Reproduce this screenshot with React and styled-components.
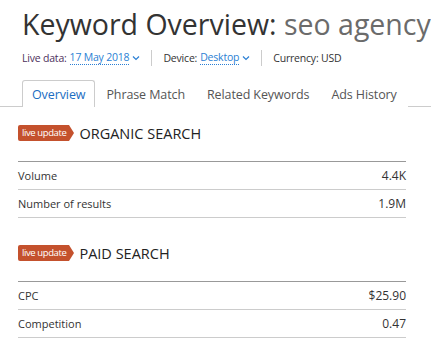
import styled, { createGlobalStyle } from "styled-components";

const Global = createGlobalStyle`
    body {
        margin: 0;
        background: #fff;
        font-family: "Open Sans", "Noto Sans", sans-serif;
        color: #333;
    }
`

const tabs = ["Overview", "Phrase Match", "Related Keywords", "Ads History"];

const sections = [
    {
        title: "ORGANIC SEARCH",
        rows: [["Volume", "4.4K"], ["Number of results", "1.9M"]],
    },
    {
        title: "PAID SEARCH",
        rows: [["CPC", "$25.90"], ["Competition", "0.47"]],
    },
];

function Chevron() {
    return (
        <svg width="8" height="6" viewBox="0 0 8 6">
            <path d="M1 1.5 L4 4.5 L7 1.5" fill="none" stroke="#2b7fd4" strokeWidth="1.2" />
        </svg>
    );
}

export default function App() {
    return (
        <Page>
            <Global />
            <Header>
                <Title>
                    Keyword Overview: <Keyword>seo agency</Keyword>
                </Title>
                <Info>
                    <InfoItem>
                        <Label purple>Live data:</Label>
                        <Link>17 May 2018</Link>
                        <Chevron />
                    </InfoItem>
                    <Divider />
                    <InfoItem>
                        <Label>Device:</Label>
                        <Link>Desktop</Link>
                        <Chevron />
                    </InfoItem>
                    <Divider />
                    <InfoItem>
                        <Label>Currency: USD</Label>
                    </InfoItem>
                </Info>
            </Header>
            <Tabs>
                {tabs.map((t, i) => (
                    <Tab key={t} active={i === 0}>{t}</Tab>
                ))}
            </Tabs>
            {sections.map((s) => (
                <Section key={s.title}>
                    <SectionHead>
                        <Badge>live update</Badge>
                        <SectionTitle>{s.title}</SectionTitle>
                    </SectionHead>
                    <Table>
                        {s.rows.map(([k, v]) => (
                            <Row key={k}>
                                <span>{k}</span>
                                <Value>{v}</Value>
                            </Row>
                        ))}
                    </Table>
                </Section>
            ))}
        </Page>
    );
}

const Page = styled.div`
    width: 431px;
    height: 338px;
    overflow: hidden;
`
const Header = styled.div`
    padding: 7px 0 0 22px;
`
const Title = styled.h1`
    margin: 0;
    font-weight: 400;
    font-size: 28.5px;
    line-height: 34px;
    color: #333;
    white-space: nowrap;
    letter-spacing: 0;
`
const Keyword = styled.span`
    color: #6b6b6b;
`
const Info = styled.div`
    display: flex;
    align-items: center;
    margin-top: 9px;
    height: 16px;
    font-size: 10.5px;
    letter-spacing: -0.2px;
`
const InfoItem = styled.div`
    display: flex;
    align-items: center;
    gap: 3px;
`
const Label = styled.span`
    color: ${(props) => props.purple ? "#4d2f5c" : "#333"};
`
const Link = styled.span`
    color: #2b7fd4;
    border-bottom: 1px dotted #2b7fd4;
    line-height: 13px;
`
const Divider = styled.div`
    width: 1px;
    height: 16px;
    background: #ccc;
    margin: 0 11px;
`
const Tabs = styled.div`
    display: flex;
    align-items: flex-end;
    margin-top: 14px;
    padding-left: 22px;
    height: 26px;
    border-bottom: 1px solid #ccc;
`
const Tab = styled.div`
    box-sizing: border-box;
    display: flex;
    align-items: center;
    padding: 0 ${(props) => props.active ? "9px" : "10px"};
    font-size: 12.5px;
    letter-spacing: -0.1px;
    color: ${(props) => props.active ? "#1a6dc2" : "#555"};
    border: 1px solid ${(props) => props.active ? "#ccc" : "transparent"};
    border-bottom: none;
    border-radius: 3px 3px 0 0;
    background: #fff;
    position: relative;
    top: 1px;
    height: 27px;
`
const Section = styled.div`
    padding: 18px 25px 0 18px;
    & + & {
        padding-top: 27px;
    }
`
const SectionHead = styled.div`
    display: flex;
    align-items: center;
    height: 16px;
`
const Badge = styled.div`
    position: relative;
    height: 16px;
    line-height: 16px;
    padding: 0 3px 0 4px;
    margin-right: 10px;
    background: #c4512d;
    color: #fff;
    font-size: 9.5px;
    letter-spacing: -0.4px;
    border-radius: 2px 0 0 2px;
    &::after {
        content: "";
        position: absolute;
        right: -5px;
        top: 0;
        border-left: 5px solid #c4512d;
        border-top: 8px solid transparent;
        border-bottom: 8px solid transparent;
    }
`
const SectionTitle = styled.div`
    font-size: 14.5px;
    color: #222;
`
const Table = styled.div`
    margin-top: 20px;
    border-top: 1px solid #999;
`
const Row = styled.div`
    display: flex;
    justify-content: space-between;
    align-items: center;
    height: 27px;
    border-bottom: 1px solid #ccc;
    font-size: 11px;
    color: #333;
`
const Value = styled.span`
    font-size: 12px;
`
